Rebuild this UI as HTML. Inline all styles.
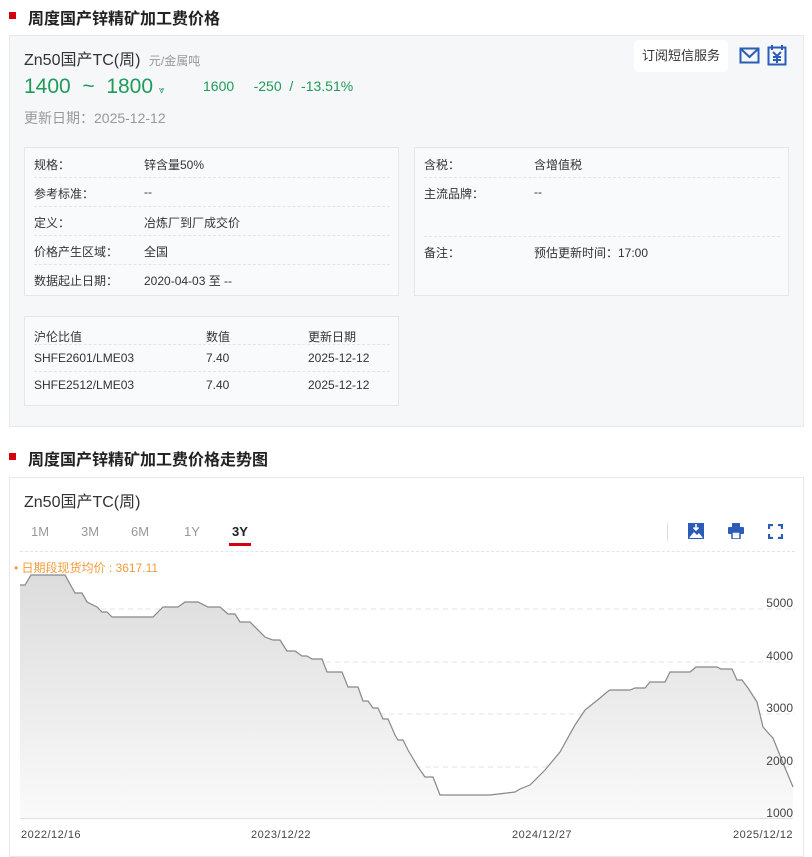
<!DOCTYPE html>
<html><head><meta charset="utf-8"><style>
*{margin:0;padding:0;box-sizing:border-box}
body{width:812px;height:850px;background:#fff;position:relative;overflow:hidden;font-family:"Liberation Sans","Noto Sans CJK SC",sans-serif;color:#333}
.a{position:absolute;white-space:nowrap}
.sq{position:absolute;width:7px;height:7px;background:#d4000f}
.h{font-size:16px;font-weight:bold;color:#222}
.panel{position:absolute;left:9px;top:35px;width:795px;height:392px;background:#f6f7f9;border:1px solid #e6e8eb}
.box{position:absolute;background:#f9fafb;border:1px solid #e4e6e9}
.t{font-size:12px;color:#333}
.dl{position:absolute;height:0;border-top:1px dashed #e2e4e7}
</style></head><body>
<div class="sq" style="left:9px;top:12px"></div>
<div class="a h" style="left:28px;top:5px">周度国产锌精矿加工费价格</div>
<div class="panel"></div>
<div class="a" style="left:24px;top:46px;font-size:16px;color:#333">Zn50国产TC(周) <span style="font-size:12px;color:#999;margin-left:4px">元/金属吨</span></div>
<div class="a" style="left:24px;top:75px;font-size:21px;color:#1e9b5a">1400 &nbsp;~ &nbsp;1800 <span style="font-size:10px">⩔</span></div>
<div class="a" style="left:203px;top:78px;font-size:14px;color:#1e9b5a">1600 &nbsp;&nbsp;&nbsp;&nbsp;-250 &nbsp;/ &nbsp;-13.51%</div>
<div class="a" style="left:24px;top:108px;font-size:14px;color:#999">更新日期：2025-12-12</div>
<div class="a" style="left:634px;top:40px;width:94px;height:32px;background:#fff;border-radius:4px;font-size:13px;line-height:32px;text-align:center;color:#333">订阅短信服务</div>
<svg class="a" style="left:739px;top:46px" width="22" height="20"><rect x="1.5" y="2.5" width="18" height="14" fill="none" stroke="#2b5cb8" stroke-width="2"/><path d="M2 3l8.5 8 8.5-8" fill="none" stroke="#2b5cb8" stroke-width="2"/></svg>
<svg class="a" style="left:767px;top:44px" width="20" height="22"><rect x="1.5" y="3.5" width="17" height="17" fill="none" stroke="#2b5cb8" stroke-width="2"/><path d="M5 1v5M15 1v5M6 8l4 4 4-4M10 12v7M6 13h8M6 16h8" fill="none" stroke="#2b5cb8" stroke-width="2"/></svg>

<div class="box" style="left:24px;top:147px;width:375px;height:149px"></div>
<div class="a t" style="left:34px;top:156px">规格：</div><div class="a t" style="left:144px;top:156px">锌含量50%</div>
<div class="dl" style="left:34px;top:177px;width:356px"></div>
<div class="a t" style="left:34px;top:185px">参考标准：</div><div class="a t" style="left:144px;top:185px">--</div>
<div class="dl" style="left:34px;top:206px;width:356px"></div>
<div class="a t" style="left:34px;top:214px">定义：</div><div class="a t" style="left:144px;top:214px">冶炼厂到厂成交价</div>
<div class="dl" style="left:34px;top:235px;width:356px"></div>
<div class="a t" style="left:34px;top:243px">价格产生区域：</div><div class="a t" style="left:144px;top:243px">全国</div>
<div class="dl" style="left:34px;top:264px;width:356px"></div>
<div class="a t" style="left:34px;top:272px">数据起止日期：</div><div class="a t" style="left:144px;top:272px">2020-04-03 至 --</div>

<div class="box" style="left:414px;top:147px;width:375px;height:149px"></div>
<div class="a t" style="left:424px;top:156px">含税：</div><div class="a t" style="left:534px;top:156px">含增值税</div>
<div class="dl" style="left:424px;top:177px;width:356px"></div>
<div class="a t" style="left:424px;top:185px">主流品牌：</div><div class="a t" style="left:534px;top:185px">--</div>
<div class="dl" style="left:424px;top:236px;width:356px"></div>
<div class="a t" style="left:424px;top:244px">备注：</div><div class="a t" style="left:534px;top:244px">预估更新时间：17:00</div>

<div class="box" style="left:24px;top:316px;width:375px;height:90px"></div>
<div class="a t" style="left:34px;top:328px">沪伦比值</div><div class="a t" style="left:206px;top:328px">数值</div><div class="a t" style="left:308px;top:328px">更新日期</div>
<div class="dl" style="left:34px;top:344px;width:356px"></div>
<div class="a t" style="left:34px;top:351px">SHFE2601/LME03</div><div class="a t" style="left:206px;top:351px">7.40</div><div class="a t" style="left:308px;top:351px">2025-12-12</div>
<div class="dl" style="left:34px;top:371px;width:356px"></div>
<div class="a t" style="left:34px;top:378px">SHFE2512/LME03</div><div class="a t" style="left:206px;top:378px">7.40</div><div class="a t" style="left:308px;top:378px">2025-12-12</div>

<div class="sq" style="left:9px;top:453px"></div>
<div class="a h" style="left:28px;top:446px">周度国产锌精矿加工费价格走势图</div>
<div class="a" style="left:9px;top:477px;width:795px;height:380px;border:1px solid #e6e8eb;background:#fff"></div>
<div class="a" style="left:24px;top:488px;font-size:16px;color:#333">Zn50国产TC(周)</div>
<div class="a" style="left:31px;top:524px;font-size:13px;color:#999">1M</div>
<div class="a" style="left:81px;top:524px;font-size:13px;color:#999">3M</div>
<div class="a" style="left:131px;top:524px;font-size:13px;color:#999">6M</div>
<div class="a" style="left:184px;top:524px;font-size:13px;color:#999">1Y</div>
<div class="a" style="left:232px;top:524px;font-size:13px;color:#222;font-weight:bold">3Y</div>
<div class="a" style="left:229px;top:543px;width:22px;height:3px;background:#d4000f"></div>
<div class="a" style="left:667px;top:523px;width:1px;height:18px;background:#ddd"></div>
<svg class="a" style="left:688px;top:523px" width="16" height="16"><rect x="0" y="0" width="16" height="16" fill="#2b5cb8"/><path d="M1 15l5-6 3 3 2-2 4 5z" fill="#fff"/><path d="M8 1v6M5.5 4.5L8 7l2.5-2.5" stroke="#fff" stroke-width="1.6" fill="none"/></svg>
<svg class="a" style="left:728px;top:523px" width="16" height="16"><rect x="4" y="0" width="8" height="4" fill="#2b5cb8"/><rect x="0" y="4" width="16" height="7" rx="1" fill="#2b5cb8"/><rect x="4" y="9" width="8" height="7" fill="#fff" stroke="#2b5cb8" stroke-width="1.5"/></svg>
<svg class="a" style="left:768px;top:524px" width="15" height="15" fill="none" stroke="#2b5cb8" stroke-width="2.2"><path d="M1 5V1h4M10 1h4v4M14 10v4h-4M5 14H1v-4"/></svg>
<div class="dl" style="left:20px;top:551px;width:775px"></div>
<div class="a" style="left:14px;top:559px;font-size:12px;color:#f39b3a">• 日期段现货均价 : 3617.11</div>

<svg class="a" style="left:0;top:0" width="812" height="850">
<defs><linearGradient id="g" x1="0" y1="0" x2="0" y2="1"><stop offset="0" stop-color="#dcdcdc"/><stop offset="1" stop-color="#fafafa"/></linearGradient></defs>
<g stroke="#e3e3e3" stroke-dasharray="5 4"><line x1="20" y1="609" x2="795" y2="609"/><line x1="20" y1="662" x2="795" y2="662"/><line x1="20" y1="714" x2="795" y2="714"/><line x1="20" y1="767" x2="795" y2="767"/></g>
<path d="M20,818 L20,585 25,585 31,575 65,575 75,593 82,593 87,602 97,607 102,612 107,612 112,617 153,617 163,607 178,607 185,602 198,602 208,607 220,607 228,614 235,614 240,622 250,622 265,637 273,640 280,640 287,651 295,651 302,656 307,656 312,659 322,659 327,672 342,672 348,687 358,687 363,701 368,701 373,708 378,708 383,719 388,719 395,735 398,740 403,740 408,750 418,767 425,777 433,777 440,795 490,795 515,792 520,789 530,785 545,770 560,752 575,725 585,710 600,698 607,692 610,690 630,690 635,688 645,688 650,682 665,682 670,672 690,672 696,667 717,667 721,669 732,669 737,680 742,680 748,688 757,702 763,727 770,735 773,738 783,763 793,787 793,818Z" fill="url(#g)"/>
<path d="M20,585 25,585 31,575 65,575 75,593 82,593 87,602 97,607 102,612 107,612 112,617 153,617 163,607 178,607 185,602 198,602 208,607 220,607 228,614 235,614 240,622 250,622 265,637 273,640 280,640 287,651 295,651 302,656 307,656 312,659 322,659 327,672 342,672 348,687 358,687 363,701 368,701 373,708 378,708 383,719 388,719 395,735 398,740 403,740 408,750 418,767 425,777 433,777 440,795 490,795 515,792 520,789 530,785 545,770 560,752 575,725 585,710 600,698 607,692 610,690 630,690 635,688 645,688 650,682 665,682 670,672 690,672 696,667 717,667 721,669 732,669 737,680 742,680 748,688 757,702 763,727 770,735 773,738 783,763 793,787" fill="none" stroke="#888" stroke-width="1.2"/>
<line x1="20" y1="818.5" x2="793" y2="818.5" stroke="#e0e0e0"/>
<g font-size="12" fill="#444" font-family="Liberation Sans,sans-serif" text-anchor="end"><text x="793" y="607">5000</text><text x="793" y="660">4000</text><text x="793" y="712">3000</text><text x="793" y="765">2000</text><text x="793" y="817">1000</text></g>
<g font-size="11" fill="#444" font-family="Liberation Sans,sans-serif" letter-spacing="0.5"><text x="21" y="838">2022/12/16</text><text x="251" y="838">2023/12/22</text><text x="512" y="838">2024/12/27</text><text x="733" y="838">2025/12/12</text></g>
</svg>
</body></html>
